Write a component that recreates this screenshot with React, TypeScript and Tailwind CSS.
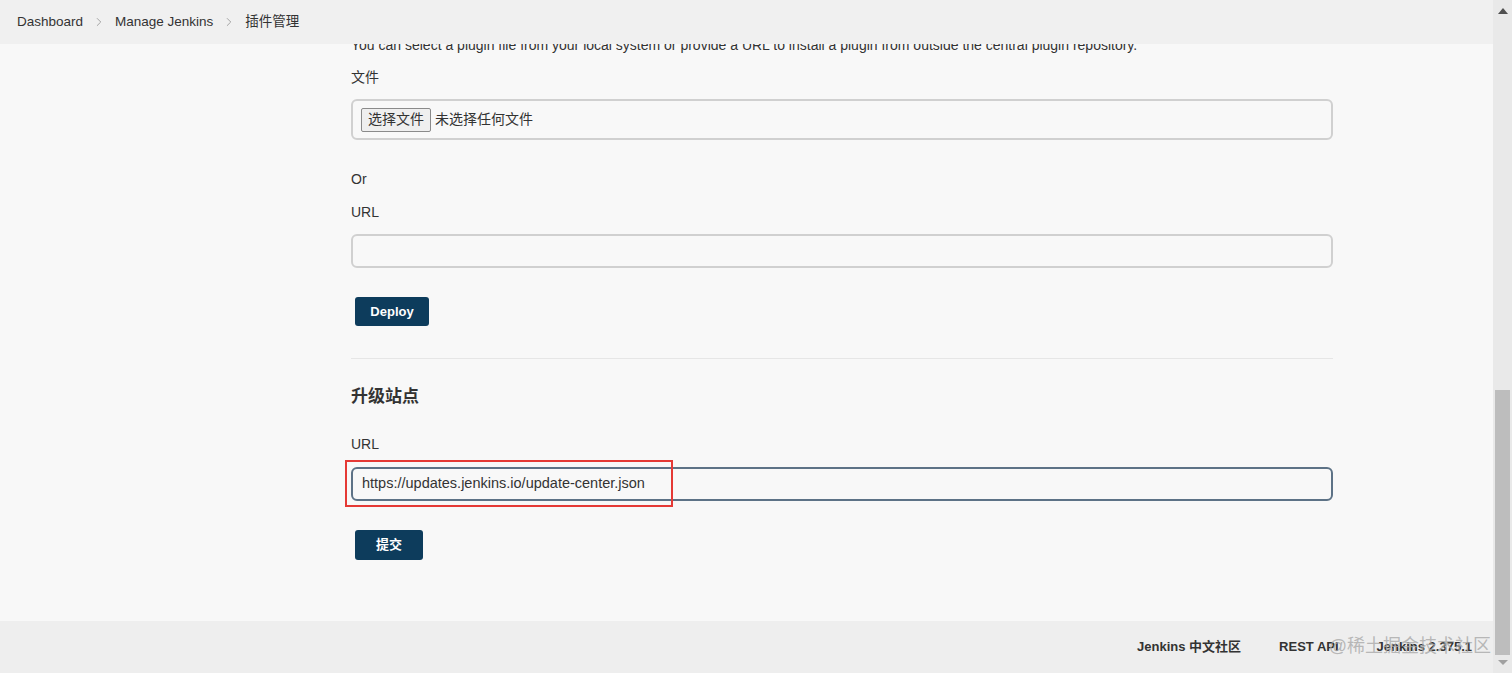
import { ChevronRight } from "lucide-react";

const font = "font-['Liberation_Sans','Noto_Sans_CJK_SC',sans-serif]";

const Crumb = ({ label, last }: { label: string; last?: boolean }) => (
  <div className="flex items-center">
    <span className="text-[13.5px] text-[#333]">{label}</span>
    {!last && <ChevronRight className="mx-[9px] h-[14px] w-[14px] text-[#999]" strokeWidth={1.5} />}
  </div>
);

const PrimaryButton = ({ label, className }: { label: string; className?: string }) => (
  <button
    className={`ml-[4px] flex items-center justify-center rounded-[3px] bg-[#0d3c5c] text-[13px] font-bold text-white ${className ?? ""}`}
  >
    {label}
  </button>
);

export default function App() {
  return (
    <div className={`flex h-[673px] w-[1512px] overflow-hidden bg-[#f8f8f8] text-[#333] ${font}`}>
      <div className="relative flex flex-1 flex-col">
        {/* sticky breadcrumb bar */}
        <div className="absolute left-0 right-0 top-0 z-10 flex h-[44px] items-center bg-[#f0f0f0] pl-[17px]">
          <Crumb label="Dashboard" />
          <Crumb label="Manage Jenkins" />
          <Crumb label="插件管理" last />
        </div>

        <main className="flex-1 pl-[351px] pt-[35px]">
          <div className="flex w-[982px] flex-col items-start">
            <p className="text-[14px] leading-[20px]">
              You can select a plugin file from your local system or provide a URL to install a plugin from outside the central plugin repository.
            </p>

            <label className="mt-[12px] text-[14px] leading-[20px]">文件</label>
            <div className="mt-[12px] flex h-[41px] w-full items-center rounded-[6px] border-2 border-[#d0d0d0] bg-[#f8f8f8] pl-[8px]">
              <span className="flex h-[24px] items-center rounded-[2px] border border-[#8a8a8a] bg-[#efefef] px-[6px] text-[14px]">
                选择文件
              </span>
              <span className="ml-[4px] text-[14px]">未选择任何文件</span>
            </div>

            <p className="mt-[29px] text-[14px] leading-[20px]">Or</p>
            <label className="mt-[13px] text-[14px] leading-[20px]">URL</label>
            <div className="mt-[12px] h-[34px] w-full rounded-[6px] border-2 border-[#d0d0d0] bg-[#f8f8f8]" />

            <PrimaryButton label="Deploy" className="mt-[29px] h-[29px] w-[74px]" />

            <div className="mt-[32px] w-full border-t border-[#e6e6e6]" />

            <h2 className="mt-[26px] text-[17px] font-bold leading-[24px]">升级站点</h2>
            <label className="mt-[25px] text-[14px] leading-[20px]">URL</label>
            <div className="relative mt-[13px] w-full">
              <div className="flex h-[34px] w-full items-center rounded-[6px] border-2 border-[#5d7286] bg-[#f8f8f8] pl-[9px] text-[14.5px]">
                https://updates.jenkins.io/update-center.json
              </div>
              <div className="absolute left-[-6px] top-[-7px] h-[47px] w-[328px] border-2 border-[#e53935]" />
            </div>

            <PrimaryButton label="提交" className="mt-[29px] h-[30px] w-[68px]" />
          </div>
        </main>

        <footer className="relative flex h-[52px] items-center justify-end gap-[38px] bg-[#eeeeee] pr-[21px] text-[13px] font-bold">
          <span>Jenkins 中文社区</span>
          <span>REST API</span>
          <span>Jenkins 2.375.1</span>
          <span className="pointer-events-none absolute right-[2px] top-[12px] text-[18px] font-normal text-[#a8a8a8]/80">
            @稀土掘金技术社区
          </span>
        </footer>
      </div>

      {/* scrollbar */}
      <div className="flex w-[19px] flex-col items-center bg-[#e9e9e9]">
        <div className="mt-[8px] h-0 w-0 border-x-[5px] border-b-[6px] border-x-transparent border-b-[#505050]" />
        <div className="mt-[376px] h-[265px] w-[15px] bg-[#bdbdbd]" />
        <div className="mt-[5px] h-0 w-0 border-x-[5px] border-t-[5px] border-x-transparent border-t-[#a0a0a0]" />
      </div>
    </div>
  );
}
